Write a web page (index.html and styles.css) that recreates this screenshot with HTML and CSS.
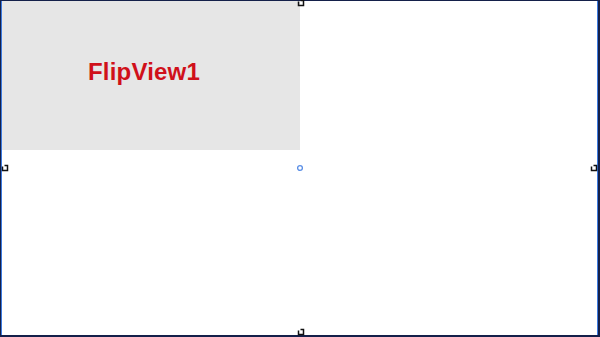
FILE: index.html
```html
<!DOCTYPE html>
<html>
<head>
<meta charset="utf-8">
<link rel="stylesheet" href="styles.css">
</head>
<body>
<div class="frame">
  <div class="panel"><span class="title">FlipView1</span></div>
  <svg class="handle h-top" width="8" height="8" viewBox="0 0 8 8"><path d="M1.5 2.5 V6.5 H6.5 V1.5 H3.5" fill="none" stroke="#111" stroke-width="1.5"/></svg>
  <svg class="handle h-left" width="8" height="8" viewBox="0 0 8 8"><path d="M1.5 2.5 V6.5 H6.5 V1.5 H3.5" fill="none" stroke="#111" stroke-width="1.5"/></svg>
  <svg class="handle h-right" width="8" height="8" viewBox="0 0 8 8"><path d="M1.5 2.5 V6.5 H6.5 V1.5 H3.5" fill="none" stroke="#111" stroke-width="1.5"/></svg>
  <svg class="handle h-bottom" width="8" height="8" viewBox="0 0 8 8"><path d="M1.5 2.5 V6.5 H6.5 V1.5 H3.5" fill="none" stroke="#111" stroke-width="1.5"/></svg>
  <svg class="handle h-center" width="8" height="8" viewBox="0 0 8 8"><circle cx="4" cy="4" r="2.4" fill="#fff" stroke="#5b8fe6" stroke-width="1.3"/></svg>
</div>
</body>
</html>
```
FILE: styles.css
```css
html, body {
  margin: 0;
  padding: 0;
  background: #ffffff;
}
.frame {
  position: relative;
  box-sizing: border-box;
  width: 600px;
  height: 337px;
  border-top: 1px solid #14204a;
  border-bottom: 2px solid #14204a;
  border-left: 1px solid #14204a;
  border-right: 2px solid #14204a;
  box-shadow: inset 1px 0 0 #3d7be0, inset -1px 0 0 #3d7be0;
  background: #ffffff;
  padding-left: 1px;
}
.panel {
  width: 298px;
  height: 149px;
  background: #e6e6e6;
  display: flex;
  align-items: center;
  justify-content: center;
}
.title {
  font-family: "Liberation Sans", Arial, sans-serif;
  font-weight: bold;
  font-size: 24px;
  letter-spacing: 0.2px;
  color: #d0101a;
  margin-top: -8px;
  margin-right: 14px;
}
.handle {
  position: absolute;
  display: block;
}
.h-top { left: 296px; top: -2px; }
.h-left { left: 0px; top: 163px; }
.h-right { left: 589px; top: 163px; }
.h-bottom { left: 296px; top: 327px; }
.h-center { left: 295px; top: 163px; }
```
